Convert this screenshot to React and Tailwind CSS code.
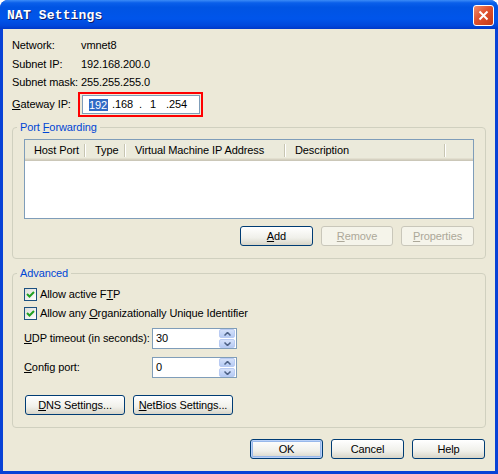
import React from "react";

const u = (ch) => <span className="underline underline-offset-[1px]">{ch}</span>;

const XPButton = ({ children, width = "w-[73px]", disabled = false, isDefault = false }) => (
  <button
    className={
      disabled
        ? `${width} h-[20px] shrink-0 whitespace-nowrap rounded-[3px] border border-[#C9C7BA] bg-[#F5F4EA] text-[#ACA899] text-[11px] leading-[18px]`
        : isDefault
        ? `${width} h-[20px] shrink-0 whitespace-nowrap rounded-[3px] border border-[#003C74] bg-[linear-gradient(to_bottom,#FFFFFF,#F0F0EA_60%,#D8D5C8)] text-black text-[11px] leading-[16px] shadow-[inset_0_0_0_1px_#B9D1F8,inset_0_0_0_2px_#98B8EA]`
        : `${width} h-[20px] shrink-0 whitespace-nowrap rounded-[3px] border border-[#003C74] bg-[linear-gradient(to_bottom,#FFFFFF,#F0F0EA_60%,#D8D5C8)] text-black text-[11px] leading-[18px]`
    }
  >
    {children}
  </button>
);

const Checkbox = () => (
  <div className="w-[13px] h-[13px] shrink-0 border border-[#1C5180] bg-[linear-gradient(135deg,#DCDCD7,#FFFFFF)] flex items-center justify-center">
    <svg width="9" height="9" viewBox="0 0 9 9">
      <path d="M1 4 L3.5 6.5 L8 2" fill="none" stroke="#21A121" strokeWidth="2" />
    </svg>
  </div>
);

const Spin = ({ value }) => (
  <div className="w-[85px] h-[21px] shrink-0 border border-[#7F9DB9] bg-white flex items-center">
    <span className="flex-1 pl-[3px] text-[11px]">{value}</span>
    <div className="flex flex-col w-[16px] h-[19px] mr-[1px]">
      <div className="h-[9px] rounded-[2px] border border-[#B9CBF3] bg-[linear-gradient(to_bottom,#D5E1FA,#B6CBF4)] flex items-center justify-center">
        <svg width="7" height="4" viewBox="0 0 7 4">
          <path d="M0.5 3.5 L3.5 0.5 L6.5 3.5" fill="none" stroke="#4D6185" strokeWidth="1.5" />
        </svg>
      </div>
      <div className="h-[1px]" />
      <div className="h-[9px] rounded-[2px] border border-[#B9CBF3] bg-[linear-gradient(to_bottom,#D5E1FA,#B6CBF4)] flex items-center justify-center">
        <svg width="7" height="4" viewBox="0 0 7 4">
          <path d="M0.5 0.5 L3.5 3.5 L6.5 0.5" fill="none" stroke="#4D6185" strokeWidth="1.5" />
        </svg>
      </div>
    </div>
  </div>
);

const HeaderCell = ({ label, width }) => (
  <div className={`${width} h-full flex items-center justify-between`}>
    <span className="pl-[9px] pt-[2px] whitespace-nowrap">{label}</span>
    <span className="w-[2px] h-[13px] mt-[2px] border-l border-[#C7C5B2] border-r border-r-white" />
  </div>
);

export default function App() {
  return (
    <div
      className="w-[498px] h-[474px] bg-white text-black text-[11px] tracking-[-0.1px]"
      style={{ fontFamily: '"Liberation Sans", Arial, sans-serif' }}
    >
      <div className="w-full h-full rounded-t-[8px] bg-[#0842D6] flex flex-col overflow-hidden">
        {/* Title bar */}
        <div className="h-[29px] shrink-0 flex items-center justify-between pl-[7px] pr-[4px] pt-[2px] bg-[linear-gradient(to_bottom,#3B8BF7_0%,#0A5FEA_10%,#0054E3_25%,#0055EB_65%,#0048DC_88%,#0038C8_100%)]">
          <span
            className="text-white font-bold text-[13px] leading-none tracking-[0.15px] [text-shadow:1px_1px_0_#0A1C6B]"
            style={{ fontFamily: '"Liberation Mono", monospace' }}
          >
            NAT Settings
          </span>
          <div className="w-[21px] h-[21px] rounded-[3px] border border-white bg-[linear-gradient(135deg,#F08D6D,#E0512E_45%,#C23A17)] flex items-center justify-center">
            <svg width="11" height="11" viewBox="0 0 11 11">
              <path d="M1.5 1.5 L9.5 9.5 M9.5 1.5 L1.5 9.5" stroke="white" strokeWidth="2" />
            </svg>
          </div>
        </div>

        {/* Client area */}
        <div className="mx-[3px] h-[442px] bg-[#ECE9D8] flex flex-col px-[9px] pt-[7px]">
          <div className="flex h-[19px] items-center">
            <span className="w-[69px]">Network:</span>
            <span>vmnet8</span>
          </div>
          <div className="flex h-[18px] items-center">
            <span className="w-[69px]">Subnet IP:</span>
            <span>192.168.200.0</span>
          </div>
          <div className="flex h-[18px] items-center">
            <span className="w-[69px] whitespace-nowrap">Subnet mask:</span>
            <span>255.255.255.0</span>
          </div>
          <div className="flex items-center mt-[1px] h-[25px]">
            <span className="w-[66px]">{u("G")}ateway IP:</span>
            <div className="w-[125px] h-[25px] border-2 border-[#FF0000] p-[1px]">
              <div className="h-[19px] w-[118px] ml-[1px] border border-[#7F9DB9] bg-white flex items-center pl-[6px]">
                <span className="bg-[#316AC5] text-white w-[19px] h-[12px] leading-[12px]">192</span>
                <span className="ml-[4px]">.168</span>
                <span className="ml-[6px]">.</span>
                <span className="ml-[8px]">1</span>
                <span className="ml-[10px]">.254</span>
              </div>
            </div>
          </div>

          {/* Port Forwarding */}
          <fieldset className="mt-[4px] border border-[#D0D0BF] rounded-[4px] px-[11px] pb-[12px]">
            <legend className="ml-[-7px] px-[3px] text-[#0046D5] leading-[13px]">
              Port {u("F")}orwarding
            </legend>
            <div className="mt-[5px] h-[80px] border border-[#7F9DB9] bg-white flex flex-col">
              <div className="h-[21px] flex flex-col bg-[#EBEADB]">
                <div className="h-[18px] flex items-center">
                  <HeaderCell label="Host Port" width="w-[61px]" />
                  <HeaderCell label="Type" width="w-[40px]" />
                  <HeaderCell label="Virtual Machine IP Address" width="w-[160px]" />
                  <HeaderCell label="Description" width="w-[160px]" />
                </div>
                <div className="h-[1px] bg-[#E2DFCF]" />
                <div className="h-[1px] bg-[#D6D2C2]" />
                <div className="h-[1px] bg-[#CBC7B8]" />
              </div>
            </div>
            <div className="mt-[7px] flex justify-end gap-[8px]">
              <XPButton>{u("A")}dd</XPButton>
              <XPButton width="w-[72px]" disabled>{u("R")}emove</XPButton>
              <XPButton disabled>{u("P")}roperties</XPButton>
            </div>
          </fieldset>

          {/* Advanced */}
          <fieldset className="mt-[8px] border border-[#D0D0BF] rounded-[4px] px-[11px] pb-[12px]">
            <legend className="ml-[-7px] px-[3px] text-[#0046D5] leading-[13px]">Advanced</legend>
            <div className="mt-[5px] flex items-center h-[19px] gap-[3px]">
              <Checkbox />
              <span className="whitespace-nowrap">Allow active F{u("T")}P</span>
            </div>
            <div className="flex items-center h-[19px] gap-[3px]">
              <Checkbox />
              <span className="whitespace-nowrap">Allow any {u("O")}rganizationally Unique Identifier</span>
            </div>
            <div className="mt-[5px] flex items-center">
              <span className="w-[128px] shrink-0 whitespace-nowrap">{u("U")}DP timeout (in seconds):</span>
              <Spin value="30" />
            </div>
            <div className="mt-[8px] flex items-center">
              <span className="w-[128px] shrink-0 whitespace-nowrap">{u("C")}onfig port:</span>
              <Spin value="0" />
            </div>
            <div className="mt-[17px] flex gap-[8px] pl-[1px]">
              <XPButton width="w-[100px]">{u("D")}NS Settings...</XPButton>
              <XPButton width="w-[100px]">{u("N")}etBios Settings...</XPButton>
            </div>
          </fieldset>

          <div className="mt-[11px] flex justify-end gap-[8px] pr-[1px]">
            <XPButton isDefault>OK</XPButton>
            <XPButton>Cancel</XPButton>
            <XPButton>Help</XPButton>
          </div>
        </div>
      </div>
    </div>
  );
}
